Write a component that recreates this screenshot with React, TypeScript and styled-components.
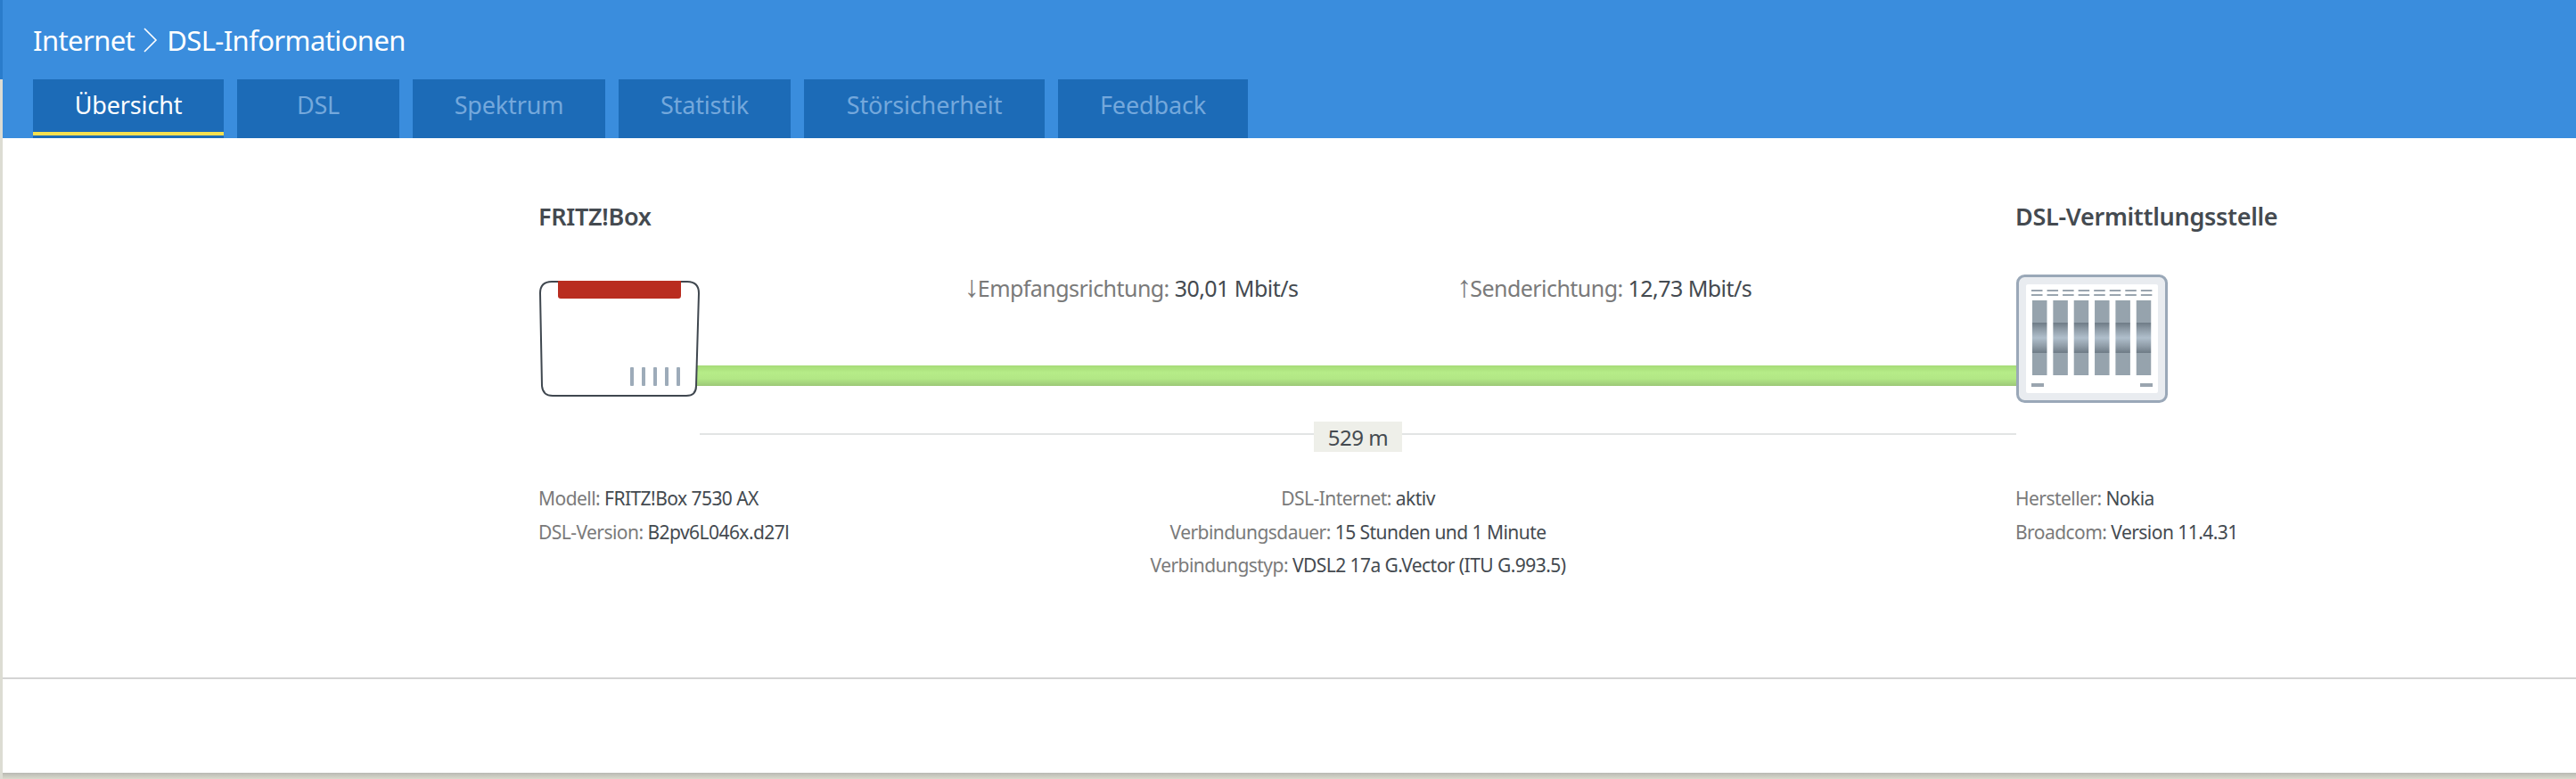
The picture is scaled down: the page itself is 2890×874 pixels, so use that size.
import styled, { createGlobalStyle } from "styled-components";

const GlobalStyle = createGlobalStyle`
    html, body {
        margin: 0;
        padding: 0;
        background: #dcdcd3;
        overflow: hidden;
    }
    * {
        box-sizing: border-box;
    }
`;

const tabs = ["Übersicht", "DSL", "Spektrum", "Statistik", "Störsicherheit", "Feedback"];
const tabWidths = [214, 182, 216, 193, 270, 213];

function FritzBoxIcon() {
    return (
        <svg width="180" height="130" viewBox="0 0 180 130">
            <path
                d="M14 1H166Q179 1 179 14L176 118Q176 129 165 129H15Q4 129 3 118L1 14Q1 1 14 1Z"
                fill="#fff"
                stroke="#3f474f"
                strokeWidth="2"
            />
            <path d="M21 0H159V17Q159 20 156 20H24Q21 20 21 17Z" fill="#b92d20" />
            {[102, 115, 128, 141, 154].map((x) => (
                <rect key={x} x={x} y="97" width="4" height="21" rx="1" fill="#9dabb9" />
            ))}
        </svg>
    );
}

function ExchangeIcon() {
    const bars = [0, 1, 2, 3, 4, 5];
    const dashes = [0, 1, 2, 3, 4, 5, 6, 7];
    return (
        <svg width="170" height="144" viewBox="0 0 170 144">
            <defs>
                <linearGradient id="slot" x1="0" y1="0" x2="0" y2="1">
                    <stop offset="0.3" stopColor="#96a3ad" />
                    <stop offset="0.3" stopColor="#6f7c87" />
                    <stop offset="0.38" stopColor="#8c99a4" />
                    <stop offset="0.5" stopColor="#b0bfcc" />
                    <stop offset="0.62" stopColor="#8c99a4" />
                    <stop offset="0.7" stopColor="#6f7c87" />
                    <stop offset="0.7" stopColor="#96a3ad" />
                </linearGradient>
            </defs>
            <rect x="1.5" y="1.5" width="167" height="141" rx="8" fill="#e9ecf0" stroke="#9aa8b8" strokeWidth="3" />
            <rect x="11" y="11" width="148" height="122" rx="2" fill="#fff" />
            {dashes.map((i) => (
                <g key={i} fill="#9aa5af">
                    <rect x={17 + i * 17.55} y="17" width="12.5" height="2" />
                    <rect x={17 + i * 17.55} y="22" width="12.5" height="2" />
                </g>
            ))}
            {bars.map((i) => (
                <rect key={i} x={18 + i * 23.35} y="29" width="16.5" height="84" fill="url(#slot)" />
            ))}
            <rect x="17" y="122" width="14" height="4" fill="#9aa5af" />
            <rect x="139" y="122" width="14" height="4" fill="#9aa5af" />
        </svg>
    );
}

export default function App() {
    return (
        <Shell>
            <GlobalStyle />
            <TitleBar>
                <span>Internet</span>
                <Chevron width="18" height="28" viewBox="0 0 18 28">
                    <path d="M2 1L15 14L2 27" fill="none" stroke="#fff" strokeWidth="1.6" />
                </Chevron>
                <span>DSL-Informationen</span>
            </TitleBar>
            <TabBar>
                {tabs.map((tab, i) => (
                    <Tab key={tab} $active={i === 0} $width={tabWidths[i]}>
                        {tab}
                    </Tab>
                ))}
            </TabBar>
            <Main>
                <Diagram>
                    <DeviceName>FRITZ!Box</DeviceName>
                    <span />
                    <DeviceName>DSL-Vermittlungsstelle</DeviceName>

                    <DeviceCell>
                        <FritzBoxIcon />
                    </DeviceCell>
                    <LinkCell>
                        <Rates>
                            <Rate>
                                <Arrow>↓</Arrow>Empfangsrichtung: <Value>30,01 Mbit/s</Value>
                            </Rate>
                            <Rate>
                                <Arrow>↑</Arrow>Senderichtung: <Value>12,73 Mbit/s</Value>
                            </Rate>
                        </Rates>
                        <Cable />
                    </LinkCell>
                    <DeviceCell>
                        <ExchangeIcon />
                    </DeviceCell>

                    <span />
                    <Distance>
                        <DistanceBadge>529 m</DistanceBadge>
                    </Distance>
                    <span />

                    <Meta>
                        <MetaRow>
                            Modell: <Value>FRITZ!Box 7530 AX</Value>
                        </MetaRow>
                        <MetaRow>
                            DSL-Version: <Value>B2pv6L046x.d27l</Value>
                        </MetaRow>
                    </Meta>
                    <Meta $center>
                        <MetaRow>
                            DSL-Internet: <Value>aktiv</Value>
                        </MetaRow>
                        <MetaRow>
                            Verbindungsdauer: <Value>15 Stunden und 1 Minute</Value>
                        </MetaRow>
                        <MetaRow>
                            Verbindungstyp: <Value>VDSL2 17a G.Vector (ITU G.993.5)</Value>
                        </MetaRow>
                    </Meta>
                    <Meta>
                        <MetaRow>
                            Hersteller: <Value>Nokia</Value>
                        </MetaRow>
                        <MetaRow>
                            Broadcom: <Value>Version 11.4.31</Value>
                        </MetaRow>
                    </Meta>
                </Diagram>
                <Footer />
            </Main>
            <BottomShade />
        </Shell>
    );
}

// STYLING
const Shell = styled.div`
    display: flex;
    flex-direction: column;
    width: 2890px;
    height: 874px;
    font-family: "Noto Sans", "Open Sans", sans-serif;
    overflow: hidden;
`;

const TitleBar = styled.header`
    display: flex;
    align-items: center;
    gap: 9px;
    height: 89px;
    padding-left: 34px;
    border-left: 3px solid #2a7ccb;
    background: #3a8ddd;
    color: #fff;
    font-size: 31px;
    letter-spacing: -0.6px;
`;

const Chevron = styled.svg`
    flex: none;
`;

const TabBar = styled.nav`
    display: flex;
    gap: 15px;
    height: 66px;
    margin-left: 3px;
    padding-left: 34px;
    background: #3a8ddd;
`;

const Tab = styled.div<{ $active: boolean; $width: number }>`
    display: flex;
    align-items: center;
    justify-content: center;
    width: ${(p) => p.$width}px;
    padding-bottom: 9px;
    font-size: 27px;
    letter-spacing: -0.15px;
    color: ${(p) => (p.$active ? "#fff" : "#74a8dc")};
    background: ${(p) =>
        p.$active
            ? "linear-gradient(#1c6bb7 0 59px, #f5e050 59px 63px, #1c6bb7 63px)"
            : "#1c6bb7"};
`;

const Main = styled.main`
    display: flex;
    flex-direction: column;
    flex: 1;
    margin-left: 3px;
    background: #fff;
`;

const Diagram = styled.section`
    display: grid;
    grid-template-columns: 180px 1477px 338px;
    height: 605px;
    align-content: start;
    margin-left: 602px;
    padding-top: 68px;
`;

const DeviceName = styled.h2`
    height: 40px;
    margin: 0 0 45px -1px;
    font-size: 27px;
    line-height: 40px;
    font-weight: 600;
    letter-spacing: -0.3px;
    color: #444a50;
    white-space: nowrap;
`;

const DeviceCell = styled.div`
    position: relative;
    z-index: 1;
    display: flex;
    align-items: center;
    height: 144px;
`;

const LinkCell = styled.div`
    display: flex;
    flex-direction: column;
`;

const Rates = styled.div`
    display: flex;
    justify-content: center;
    gap: 178px;
    height: 30px;
    margin-bottom: 72px;
`;

const Rate = styled.div`
    font-size: 25px;
    line-height: 30px;
    letter-spacing: -0.55px;
    color: #7a7a7a;
    white-space: nowrap;
`;

const Arrow = styled.span`
    font-family: "Liberation Sans", sans-serif;
    font-size: 34px;
    line-height: 0;
    letter-spacing: -2px;
    color: #7a7a7a;
`;

const Value = styled.span`
    color: #444a50;
`;

const Cable = styled.div`
    height: 23px;
    margin-left: -4px;
    background: linear-gradient(#a6dc78 0, #b6ec88 35%, #b2e785 65%, #9cc878 100%);
`;

const Distance = styled.div`
    display: flex;
    justify-content: center;
    height: 21px;
    margin-top: 34px;
    border-top: 2px solid #e2e4e4;
`;

const DistanceBadge = styled.div`
    width: 99px;
    height: 34px;
    margin-top: -15px;
    background: #eeefe9;
    color: #444a50;
    font-size: 24px;
    line-height: 36px;
    letter-spacing: -0.5px;
    text-align: center;
`;

const Meta = styled.div<{ $center?: boolean }>`
    margin-top: 34px;
    margin-left: ${(p) => (p.$center ? "0" : "-1px")};
    text-align: ${(p) => (p.$center ? "center" : "left")};
`;

const MetaRow = styled.div`
    height: 37.5px;
    font-size: 21px;
    line-height: 37px;
    letter-spacing: -0.55px;
    color: #7a7a7a;
    white-space: nowrap;
`;

const Footer = styled.footer`
    flex: 1;
    border-top: 2px solid #d4d4d4;
`;

const BottomShade = styled.div`
    height: 7px;
    margin-left: 3px;
    background: linear-gradient(#b9b9b3, #d9d9cc);
`;
